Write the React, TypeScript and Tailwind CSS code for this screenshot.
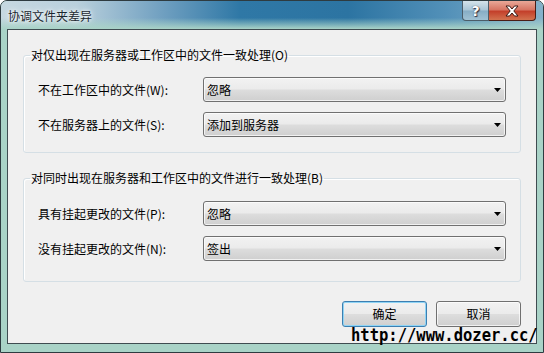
import React from "react";

const FONT = { fontFamily: '"Noto Sans CJK SC", "Noto Sans", sans-serif' };

function ComboBox({ value }: { value: string }) {
  return (
    <div className="flex-1 h-[25px] flex items-center rounded-[3px] border border-[#707070] bg-[linear-gradient(to_bottom,#f2f2f2_0%,#ebebeb_48%,#dddddd_52%,#cfcfcf_100%)] shadow-[inset_0_0_0_1px_rgba(255,255,255,0.7)] pl-[3px] pr-[4px]">
      <span className="flex-1 text-[12px] leading-none text-black">{value}</span>
      <svg width="7" height="4" viewBox="0 0 7 4">
        <path d="M0 0H7L3.5 4Z" fill="#000" />
      </svg>
    </div>
  );
}

function Row({ label, value }: { label: string; value: string }) {
  return (
    <div className="flex items-center">
      <span className="w-[165px] text-[12px] leading-none text-black">{label}</span>
      <ComboBox value={value} />
    </div>
  );
}

function Group({ title, children, pt, pb }: { title: string; children: React.ReactNode; pt: string; pb: string }) {
  return (
    <fieldset className="mx-[15px] mr-[15px] rounded-[3px] border border-[#d5dfe5] shadow-[inset_1px_1px_0_#fff] p-0">
      <legend className="ml-[6px] px-[1px] text-[12px] leading-[16px] text-black">{title}</legend>
      <div className={`flex flex-col gap-[10px] pl-[14px] pr-[14px] ${pt} ${pb}`}>{children}</div>
    </fieldset>
  );
}

function DialogButton({ label, primary }: { label: string; primary?: boolean }) {
  return (
    <div
      className={
        "w-[85px] h-[26px] flex items-center justify-center rounded-[3px] border text-[12px] leading-none text-black bg-[linear-gradient(to_bottom,#f2f2f2_0%,#ebebeb_48%,#dddddd_52%,#cfcfcf_100%)] " +
        (primary
          ? "border-[#3c7fb1] shadow-[inset_0_0_0_1px_#8fd4f5]"
          : "border-[#707070] shadow-[inset_0_0_0_1px_rgba(255,255,255,0.7)]")
      }
    >
      {label}
    </div>
  );
}

export default function App() {
  return (
    <div
      className="relative w-[544px] h-[353px] flex flex-col border border-[#2e3b40] rounded-t-[7px] bg-[#a9d3c7] overflow-hidden"
      style={FONT}
    >
      {/* title bar */}
      <div className="relative h-[28px] shrink-0 flex items-start pl-[7px] pt-[8px] bg-[linear-gradient(to_bottom,rgba(169,211,199,0)_60%,#a9d3c7_100%),linear-gradient(to_right,#c6d8e1_0%,#b9d0dc_14%,#6f9fc0_30%,#2f78a6_44%,#2c74a2_64%,#5290b8_82%,#86b2cb_100%)]">
        <span className="text-[12px] leading-[14px] text-[#1b2730] [text-shadow:0_0_6px_#fff,0_0_3px_#fff]">
          协调文件夹差异
        </span>
        <div className="absolute top-0 right-[7px] flex">
          <div className="w-[27px] h-[20px] flex items-center justify-center rounded-bl-[4px] border border-t-0 border-[#4b5d69] bg-[linear-gradient(to_bottom,#d4e2ea_0%,#a9c5d6_48%,#86adc5_52%,#a0c2d4_100%)]">
            <span className="text-[14px] font-bold leading-none text-white [text-shadow:0_0_1px_#223,1px_1px_1px_#334]" style={{ fontFamily: '"DejaVu Sans", sans-serif' }}>
              ?
            </span>
          </div>
          <div className="w-[47px] h-[20px] flex items-center justify-center rounded-br-[4px] border border-l-0 border-t-0 border-[#4a1d16] bg-[linear-gradient(to_bottom,#e9a898_0%,#d77664_45%,#c4402b_55%,#d2724f_100%)]">
            <svg width="14" height="12" viewBox="0 0 14 12">
              <path
                d="M1 1H4.5L7 4L9.5 1H13L8.8 6L13 11H9.5L7 8L4.5 11H1L5.2 6Z"
                fill="#fff"
                stroke="#3a1a14"
                strokeWidth="1"
                strokeLinejoin="round"
              />
            </svg>
          </div>
        </div>
      </div>

      {/* client area */}
      <div className="mx-[6px] h-[315px] shrink-0 flex flex-col border border-[#3f4c51] bg-[#f0f0f0]">
        <div className="mt-[17px]">
          <Group title="对仅出现在服务器或工作区中的文件一致处理(O)" pt="pt-[14px]" pb="pb-[15px]">
            <Row label="不在工作区中的文件(W):" value="忽略" />
            <Row label="不在服务器上的文件(S):" value="添加到服务器" />
          </Group>
        </div>
        <div className="mt-[17px]">
          <Group title="对同时出现在服务器和工作区中的文件进行一致处理(B)" pt="pt-[15px]" pb="pb-[20px]">
            <Row label="具有挂起更改的文件(P):" value="忽略" />
            <Row label="没有挂起更改的文件(N):" value="签出" />
          </Group>
        </div>
        <div className="mt-[19px] mr-[15px] flex justify-end gap-[9px]">
          <DialogButton label="确定" primary />
          <DialogButton label="取消" />
        </div>
      </div>

      {/* watermark */}
      <span
        className="absolute left-[350px] top-[326px] text-[15.5px] font-bold leading-[20px] text-black scale-y-[1.12] origin-bottom"
        style={{ fontFamily: '"DejaVu Sans Mono", monospace' }}
      >
        http://www.dozer.cc/
      </span>
    </div>
  );
}
